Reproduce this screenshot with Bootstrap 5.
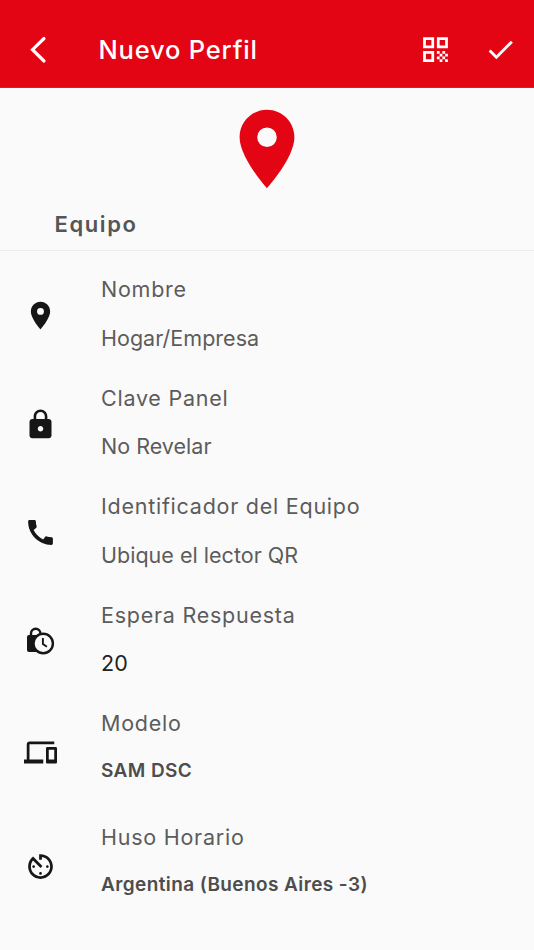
<!DOCTYPE html>
<html lang="es">
<head>
<meta charset="utf-8">
<meta name="viewport" content="width=device-width, initial-scale=1">
<title>Nuevo Perfil</title>
<link href="https://cdn.jsdelivr.net/npm/bootstrap@5.3.0/dist/css/bootstrap.min.css" rel="stylesheet">
<style>
body{background:#fafafa;font-family:Inter,"Liberation Sans",sans-serif;color:#555;height:950px;overflow:hidden}
svg{display:block;fill:currentColor}
.topbar{height:88px;background:#e30513;padding:12px 17px 0 22px;border-bottom:1px solid #d2202b}
.topbar h1{font-size:25.5px;font-weight:500;letter-spacing:.8px;line-height:32px;margin-left:43.5px}
.ico{width:33px;height:33px;flex:none}
.check{margin-left:32px}
.hero{height:107px;padding-top:14px;color:#e30513}
.hero svg{width:94px;height:94px}
.section-title{height:56px;padding:13px 0 0 54.500px;border-bottom:1px solid #ececec;font-size:22px;font-weight:600;letter-spacing:1.6px;line-height:32px;color:#555}
.field{height:108.6px;padding:25px 24px 0 23.5px}
.field .ico{margin-top:23px;color:#161616}
.field .texts{margin-left:44.5px}
.field .lbl{font-size:21.5px;letter-spacing:.75px;line-height:26px;color:#5c5c5c;font-weight:400}
.field .val{font-size:21.5px;letter-spacing:.02px;line-height:26px;margin-top:22.5px;color:#5c5c5c}
.field .val.dark{color:#222}
.field.pick{height:114px}
.field.pick .ico{margin-top:26px}
.field.pick .val{font-size:19px;font-weight:600;letter-spacing:.4px;margin-top:22px;color:#4d4d4d}
</style>
</head>
<body>
<header class="topbar d-flex align-items-center text-white">
  <svg class="ico" viewBox="0 0 33 33"><path d="M22 5.5 10.5 16.7 22 28" fill="none" stroke="currentColor" stroke-width="3.2" stroke-linecap="round" stroke-linejoin="miter"/></svg>
  <h1 class="mb-0 me-auto">Nuevo Perfil</h1>
  <svg class="ico" viewBox="0 0 24 24"><path fill-rule="evenodd" d="M3 11h8V3H3zm2-6h4v4H5zM3 21h8v-8H3zm2-6h4v4H5zM13 3v8h8V3zm6 6h-4V5h4zM19 19h2v2h-2zM13 13h2v2h-2zM15 15h2v2h-2zM13 17h2v2h-2zM15 19h2v2h-2zM17 17h2v2h-2zM17 13h2v2h-2zM19 15h2v2h-2z"/></svg>
  <svg class="ico check" viewBox="0 0 24 24"><path d="M9 16.17 4.83 12l-1.42 1.41L9 19 21 7l-1.41-1.41z"/></svg>
</header>
<main>
  <div class="hero d-flex justify-content-center">
    <svg viewBox="0 0 24 24"><path fill-rule="evenodd" d="M12 2C8.13 2 5 5.13 5 9c0 5.25 7 13 7 13s7-7.750 7-13c0-3.870-3.130-7-7-7zm0 9.500a2.500 2.500 0 1 1 0-5 2.500 2.500 0 0 1 0 5z"/></svg>
  </div>
  <h2 class="section-title mb-0">Equipo</h2>
  <div class="field d-flex">
    <svg class="ico" viewBox="0 0 24 24"><path fill-rule="evenodd" d="M12 2C8.13 2 5 5.13 5 9c0 5.25 7 13 7 13s7-7.750 7-13c0-3.870-3.130-7-7-7zm0 9.500a2.500 2.500 0 1 1 0-5 2.500 2.500 0 0 1 0 5z"/></svg>
    <div class="texts"><div class="lbl">Nombre</div><div class="val">Hogar/Empresa</div></div>
  </div>
  <div class="field d-flex">
    <svg class="ico" viewBox="0 0 24 24"><path d="M18 8h-1V6c0-2.760-2.240-5-5-5S7 3.240 7 6v2H6c-1.100 0-2 .9-2 2v10c0 1.100.9 2 2 2h12c1.100 0 2-.9 2-2V10c0-1.100-.9-2-2-2zm-6 9c-1.100 0-2-.9-2-2s.9-2 2-2 2 .9 2 2-.9 2-2 2zm3.100-9H8.900V6c0-1.710 1.390-3.100 3.100-3.100s3.100 1.390 3.100 3.100z"/></svg>
    <div class="texts"><div class="lbl">Clave Panel</div><div class="val">No Revelar</div></div>
  </div>
  <div class="field d-flex">
    <svg class="ico" viewBox="0 0 24 24"><path d="M20.010 15.380c-1.230 0-2.420-.2-3.530-.56-.35-.12-.74-.03-1.010.24l-1.570 1.970c-2.830-1.350-5.480-3.900-6.890-6.830l1.950-1.660c.27-.28.35-.67.24-1.020-.37-1.110-.56-2.300-.56-3.530 0-.54-.45-.99-.99-.99H4.190C3.650 3 3 3.240 3 3.990 3 13.280 10.730 21 20.010 21c.71 0 .99-.63.99-1.180v-3.450c0-.54-.45-.99-.99-.99z"/></svg>
    <div class="texts"><div class="lbl">Identificador del Equipo</div><div class="val">Ubique el lector QR</div></div>
  </div>
  <div class="field d-flex">
    <svg class="ico" viewBox="0 0 33 33"><path d="M7 10.500V8.500a4.700 4.700 0 0 1 9.400 0V11" fill="none" stroke="currentColor" stroke-width="2.400"/><path d="M5 10h13v17H5a2 2 0 0 1-2-2V12a2 2 0 0 1 2-2z"/><circle cx="19.200" cy="18.500" r="9.700" fill="#fafafa" stroke="currentColor" stroke-width="2.400"/><path d="M18.900 13v6l4 2.700" fill="none" stroke="currentColor" stroke-width="1.900"/></svg>
    <div class="texts"><div class="lbl">Espera Respuesta</div><div class="val dark">20</div></div>
  </div>
  <div class="field pick d-flex">
    <svg class="ico" viewBox="0 0 24 24"><path d="M4 6h18V4H4c-1.100 0-2 .9-2 2v11H0v3h14v-3H4zm19 2h-6c-.55 0-1 .45-1 1v10c0 .55.450 1 1 1h6c.55 0 1-.45 1-1V9c0-.55-.45-1-1-1zm-1 9h-4v-7h4z"/></svg>
    <div class="texts"><div class="lbl">Modelo</div><div class="val">SAM DSC</div></div>
  </div>
  <div class="field pick d-flex">
    <svg class="ico" viewBox="0 0 24 24"><path d="M11 17c0 .55.450 1 1 1s1-.45 1-1-.45-1-1-1-1 .45-1 1zm0-14v4h2V5.080c3.390.49 6 3.390 6 6.920 0 3.870-3.130 7-7 7s-7-3.130-7-7c0-1.680.59-3.220 1.580-4.420L12 13l1.410-1.410-6.800-6.800v.02C4.420 6.450 3 9.050 3 12c0 4.970 4.020 9 9 9 4.970 0 9-4.030 9-9s-4.030-9-9-9zm7 9c0-.55-.45-1-1-1s-1 .45-1 1 .45 1 1 1 1-.45 1-1zM6 12c0 .55.450 1 1 1s1-.45 1-1-.45-1-1-1-1 .45-1 1z"/></svg>
    <div class="texts"><div class="lbl">Huso Horario</div><div class="val">Argentina (Buenos Aires -3)</div></div>
  </div>
</main>
<script src="https://cdn.jsdelivr.net/npm/bootstrap@5.3.0/dist/js/bootstrap.bundle.min.js"></script>
</body>
</html>
